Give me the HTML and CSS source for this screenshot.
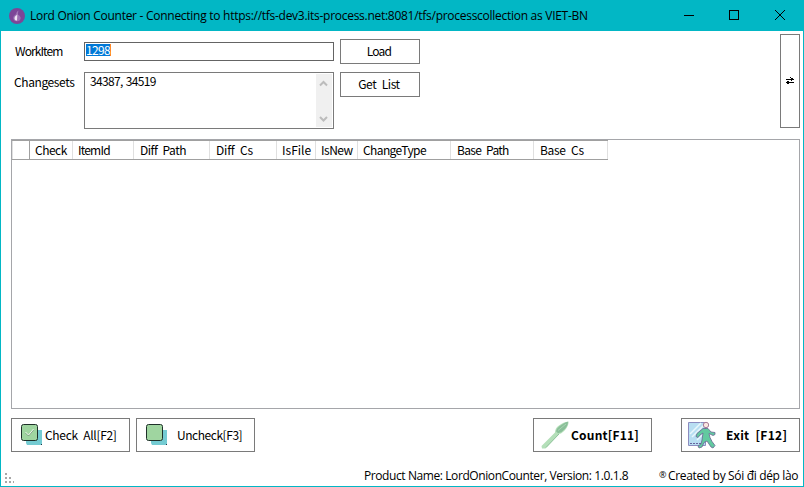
FILE: index.html
```
<!DOCTYPE html>
<html lang="en">
<head>
<meta charset="utf-8">
<title>Lord Onion Counter</title>
<link rel="stylesheet" href="styles.css">
</head>
<body>
<div class="window">
  <header class="titlebar">
    <svg class="logo" width="16" height="16" viewBox="0 0 16 16"><circle cx="8" cy="8" r="8" fill="#7d4698"/><path d="M9.400 2.500C9.500 4 8.800 4.900 8.700 5.900c.2 1.100 3 1.800 3 4.100 0 2-1.600 3.300-3.700 3.300S4.200 12 4.200 10c0-2.200 2.400-2.800 2.900-4.200.3-1.100.6-2.200 2.300-3.300z" fill="#9d70b3"/><path d="M8.500 3.500v2.500C8 7.500 5.500 8 5.500 10.200c0 1.500 1 2.300 2.500 2.400z" fill="#f0e5f5"/></svg>
    <h1 class="title">Lord Onion Counter - Connecting to https://tfs-dev3.its-process.net:8081/tfs/processcollection as VIET-BN</h1>
    <svg class="controls" width="138" height="30" viewBox="0 0 138 30" fill="none" stroke="#000" shape-rendering="crispEdges"><path d="M19 14.500h10M64.500 9.500h9v9h-9z"/><path shape-rendering="auto" d="M110 9l10 10M120 9l-10 10"/></svg>
  </header>
  <main class="content">
    <section class="top">
      <div class="form">
        <label class="label"><span class="t-workitem">WorkItem</span></label>
        <div class="input"><span class="selected">1298</span></div>
        <button class="btn small load">Load</button>
        <label class="label second"><span class="t-changesets">Changesets</span></label>
        <div class="area"><span class="ids">34387, 34519</span>
          <div class="scroll"><svg width="15" height="53" viewBox="0 0 15 53" fill="none" stroke="#bcbcbc" stroke-width="2"><path d="M4 11.500l3.500-3.500 3.500 3.500M4 43l3.500 3.500L11 43"/></svg></div>
        </div>
        <button class="btn small getlist">Get List</button>
      </div>
      <button class="btn swap" aria-label="Swap"><svg width="8" height="8" viewBox="0 0 8 8" fill="none" stroke="#000" shape-rendering="crispEdges"><path d="M0 2.500h8M0 5.500h8M4 .5h1M5 1.500h2M1 4.500h2M1 6.500h2M5 3.500h1"/></svg></button>
    </section>
    <section class="grid">
      <div class="head">
        <div class="cell corner"></div>
        <div class="cell c1">Check</div>
        <div class="cell c2">ItemId</div>
        <div class="cell c3">Diff Path</div>
        <div class="cell c4">Diff Cs</div>
        <div class="cell c5">IsFile</div>
        <div class="cell c6">IsNew</div>
        <div class="cell c7">ChangeType</div>
        <div class="cell c8">Base Path</div>
        <div class="cell c9">Base Cs</div>
      </div>
    </section>
    <section class="actions">
      <button class="btn action">
        <svg class="i-check" width="22" height="22" viewBox="0 0 22 22"><path d="M5 6h16v15H6l-1-2z" fill="#74cbd2"/><path d="M20 20h1v1h-1z" fill="#234"/><rect x=".5" y=".5" width="16" height="16" rx="2" fill="#9fd5a0" stroke="#1e3029"/><path d="M4.500 9l3 3 5-6" fill="none" stroke="#7f9f83"/><path d="M4.500 8l3 3 5-6" fill="none" stroke="#edf5eb"/></svg>
        <span class="t-check">Check All[F2]</span>
      </button>
      <button class="btn action">
        <svg class="i-check" width="22" height="22" viewBox="0 0 22 22"><path d="M5 6h16v15H6l-1-2z" fill="#74cbd2"/><path d="M20 20h1v1h-1z" fill="#234"/><rect x=".5" y=".5" width="16" height="16" rx="2" fill="#9fd5a0" stroke="#1e3029"/></svg>
        <span class="t-uncheck">Uncheck[F3]</span>
      </button>
      <button class="btn action count">
        <svg class="i-knife" width="28" height="28" viewBox="0 0 28 28"><path d="M27.500.5c.4 4-3 9-7.500 12L18 13 4.500 27.500H1L.5 25 14 11.500c0-2.500 1-5 4-7 3-2.500 6-3.500 9.500-4z" fill="#b4dfb9"/><path d="M27 .8c0 4-3 8-7 10.500l-3 1-2-2c1-3 2-4 5-6 2-1.500 4-3 7-3.500z" fill="#8abf99"/><path d="M17 9.500L25 3" stroke="#a9d5b2" fill="none"/><path d="M18 13L5 26.500" stroke="#8fc39b" fill="none"/></svg>
        <span class="t-count">Count[F11]</span>
      </button>
      <button class="btn action exit">
        <svg class="i-exit" width="28" height="28" viewBox="0 0 28 28"><path d="M.5 1.500h17v23H.5z" fill="#b8def2" stroke="#8c8cc0"/><path d="M2 13L13 2M4 16L16 4M9 19L18 10" stroke="#e9f7fc" stroke-width="1.500"/><path d="M2 22.500h11" stroke="#67639d" stroke-dasharray="2 1"/><path d="M15 7.500h5l3 3.500 4 .5v2l-2 1-4-2 1 4 2 4 3 4-2 2.500-2-1-4-6-3 1.500-2 4.500-3 1-1-2 3-2 1-4 1-7-3 2-2 2.500-2-1 1-3z" fill="#62c9a0" stroke="#686493" stroke-width=".8"/><circle cx="18" cy="4" r="2.700" fill="#f9e5df" stroke="#a67b98"/></svg>
        <span class="t-exit">Exit [F12]</span>
      </button>
    </section>
  </main>
  <footer class="status">
    <svg class="grip" width="10" height="11" viewBox="0 0 10 11" fill="#a7a7a7" shape-rendering="crispEdges"><path d="M0 0h2v2H0zM0 4h2v2H0zM4 4h2v2H4zM0 8h2v2H0zM4 8h2v2H4zM8 8h1v2H8z"/></svg>
    <span class="product">Product Name: LordOnionCounter, Version: 1.0.1.8</span>
    <span class="reg">®</span>
    <span class="credit">Created by Sói đi dép lào</span>
  </footer>
</div>
</body>
</html>
```
FILE: styles.css
```
* { box-sizing: border-box; }
body { margin: 0; }
.window {
  width: 804px;
  height: 487px;
  display: flex;
  flex-direction: column;
  border: 1px solid #02b7c5;
  background: #fff;
  color: #000;
  font: 12px/16px "Noto Sans CJK JP", sans-serif;
  overflow: hidden;
  white-space: nowrap;
}
svg { display: block; flex: none; }
.titlebar {
  height: 30px;
  flex: none;
  display: flex;
  align-items: center;
  background: #02b7c5;
  padding-left: 8px;
}
.title {
  margin: 0 0 0 5px;
  flex: 1;
  font: 12px/16px "Open Sans", sans-serif;
  letter-spacing: -0.275px;
}
.content { padding: 3px 3px 0 10px; }
.top { display: flex; justify-content: space-between; height: 105px; }
.form {
  display: grid;
  grid-template-columns: 73px 250px 80px;
  grid-template-rows: 25px 57px;
  row-gap: 8px;
  column-gap: 0;
  padding-top: 5px;
}
.label { padding: 4px 0 0 4px; }
.second { padding: 2px 0 0 3px; }
.t-workitem { letter-spacing: -0.9px; }
.t-changesets { letter-spacing: -0.4px; }
.input {
  height: 19px;
  margin-top: 3px;
  border: 1px solid #646464;
  padding: 1px;
}
.selected {
  display: inline-block;
  height: 12px;
  line-height: 12px;
  vertical-align: top;
  background: #0078d7;
  color: #fff;
  border-right: 1px solid #ff8728;
  letter-spacing: -0.66px;
}
.area {
  display: flex;
  justify-content: space-between;
  border: 1px solid #7a7a7a;
  padding: 1px 1px 1px 5px;
}
.ids { line-height: 14px; letter-spacing: -0.66px; word-spacing: 1px; }
.scroll { width: 16px; background: #f0f0f0; }
.btn {
  border: 1px solid #7a7a7a;
  border-radius: 0;
  background: #fff;
  color: #000;
  font: inherit;
  padding: 0;
}
.small { width: 80px; height: 25px; margin-left: 6px; padding: 0 2px 2px 0; }
.load { letter-spacing: -0.8px; }
.getlist { letter-spacing: -0.4px; word-spacing: 3px; }
.swap {
  width: 20px;
  height: 94px;
  display: flex;
  align-items: center;
  justify-content: center;
}
.grid {
  height: 270px;
  border: 1px solid #a5a6aa;
}
.head {
  display: flex;
  width: 596px;
  height: 20px;
  border-top: 1px solid #a0a0a0;
  border-bottom: 1px solid #a0a0a0;
}
.cell {
  border-right: 1px solid #e0e0e0;
  padding: 0 0 0 5px;
  flex: none;
  line-height: 17px;
  letter-spacing: -0.5px;
  word-spacing: 3px;
}
.corner {
  width: 18px;
  border-left: 1px solid #e0e0e0;
  border-right-color: #a0a0a0;
}
.c1 { width: 43px; }
.c2 { width: 61px; letter-spacing: -0.8px; }
.c3 { width: 76px; padding-left: 6px; }
.c4 { width: 67px; padding-left: 6px; letter-spacing: -0.2px; }
.c5 { width: 39px; letter-spacing: 0; }
.c6 { width: 42px; }
.c7 { width: 93px; letter-spacing: -0.6px; }
.c8 { width: 83px; padding-left: 6px; letter-spacing: -0.7px; }
.c9 { width: 74px; padding-left: 6px; letter-spacing: -0.3px; }
.actions { display: flex; gap: 6px; margin-top: 9px; }
.action {
  width: 119px;
  height: 34px;
  display: flex;
  align-items: center;
}
.action span { padding-bottom: 1px; }
.i-check { margin-left: 9px; }
.t-check { margin-left: 2px; letter-spacing: -0.3px; word-spacing: 3px; }
.t-uncheck { margin-left: 9px; letter-spacing: -0.45px; }
.count { margin-left: 272px; font-weight: bold; }
.exit { margin-left: 23px; font-weight: bold; }
.i-knife { margin-left: 7px; }
.i-exit { margin-left: 6px; }
.t-count { margin-left: 2px; letter-spacing: 0.2px; }
.t-exit { margin-left: 10px; letter-spacing: 0.3px; word-spacing: 3px; }
.status {
  display: flex;
  margin-top: 15px;
  padding-left: 4px;
  font: 12px/18px "Open Sans", sans-serif;
}
.grip { margin-top: 6px; }
.product { margin-left: 349px; width: 294px; letter-spacing: -0.41px; }
.reg { margin-left: 1px; font-size: 9px; line-height: 16px; width: 9px; }
.credit { flex: none; letter-spacing: -0.34px; }
```
